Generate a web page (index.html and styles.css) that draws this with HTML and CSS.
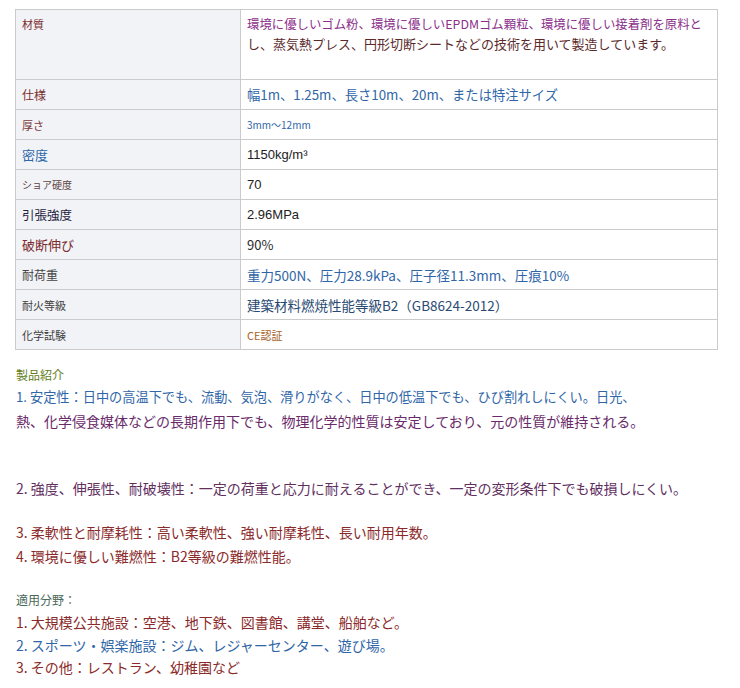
FILE: index.html
```html
<!DOCTYPE html>
<html lang="ja">
<head>
<meta charset="utf-8">
<link rel="stylesheet" href="styles.css">
</head>
<body>
<table class="spec">
  <colgroup><col class="c-label"><col class="c-value"></colgroup>
  <tr class="r-tall">
    <td class="lab top l-material">材質</td>
    <td class="val top v-material">
      <span class="ln ln1">環境に優しいゴム粉、環境に優しいEPDMゴム顆粒、環境に優しい接着剤を原料と</span>
      <span class="ln ln2">し、蒸気熱プレス、円形切断シートなどの技術を用いて製造しています。</span>
    </td>
  </tr>
  <tr>
    <td class="lab l-spec">仕様</td>
    <td class="val v-spec">幅1m、1.25m、長さ10m、20m、または特注サイズ</td>
  </tr>
  <tr>
    <td class="lab l-thick">厚さ</td>
    <td class="val v-thick">3mm〜12mm</td>
  </tr>
  <tr>
    <td class="lab l-density">密度</td>
    <td class="val v-arial">1150kg/m³</td>
  </tr>
  <tr>
    <td class="lab l-shore">ショア硬度</td>
    <td class="val v-arial">70</td>
  </tr>
  <tr>
    <td class="lab l-tensile">引張強度</td>
    <td class="val v-arial">2.96MPa</td>
  </tr>
  <tr>
    <td class="lab l-break">破断伸び</td>
    <td class="val v-pct">90%</td>
  </tr>
  <tr>
    <td class="lab l-load">耐荷重</td>
    <td class="val v-load">重力500N、圧力28.9kPa、圧子径11.3mm、圧痕10%</td>
  </tr>
  <tr>
    <td class="lab l-fire">耐火等級</td>
    <td class="val v-fire">建築材料燃焼性能等級B2（GB8624-2012）</td>
  </tr>
  <tr>
    <td class="lab l-chem">化学試験</td>
    <td class="val v-chem">CE認証</td>
  </tr>
</table>

<div class="intro">
  <p class="head head-green">製品紹介</p>
  <p class="line t-blue s13">1. 安定性：日中の高温下でも、流動、気泡、滑りがなく、日中の低温下でも、ひび割れしにくい。日光、</p>
  <p class="line t-purple">熱、化学侵食媒体などの長期作用下でも、物理化学的性質は安定しており、元の性質が維持される。</p>
  <p class="line t-plum gap-big">2. 強度、伸張性、耐破壊性：一定の荷重と応力に耐えることができ、一定の変形条件下でも破損しにくい。</p>
  <p class="line t-red gap-mid">3. 柔軟性と耐摩耗性：高い柔軟性、強い耐摩耗性、長い耐用年数。</p>
  <p class="line t-red">4. 環境に優しい難燃性：B2等級の難燃性能。</p>
  <p class="head head-gray">適用分野：</p>
  <p class="line t-red">1. 大規模公共施設：空港、地下鉄、図書館、講堂、船舶など。</p>
  <p class="line t-blue lh22">2. スポーツ・娯楽施設：ジム、レジャーセンター、遊び場。</p>
  <p class="line t-red lh22">3. その他：レストラン、幼稚園など</p>
</div>
</body>
</html>
```

FILE: styles.css
```css
html, body {
  margin: 0;
  padding: 0;
  background: #ffffff;
}

body {
  padding: 9px 15px 0 15px;
  font-family: "Noto Sans CJK JP", "Noto Sans", sans-serif;
  color: #333;
}

.spec {
  border-collapse: collapse;
  table-layout: fixed;
  width: 703px;
}

.c-label { width: 225px; }

.spec td {
  border: 1px solid #cbcbcb;
  height: 29px;
  padding: 0 6px;
  vertical-align: middle;
  line-height: 18px;
}

.spec tr.r-tall td { height: 64px; }

.spec td.top {
  vertical-align: top;
  padding-top: 5px;
}

.lab {
  background: #f2f3f7;
}

.l-material { font-size: 11px; color: #7a2d2d; }
.l-spec     { font-size: 12px; color: #7a2d2d; }
.l-thick    { font-size: 11px; color: #7a3a3a; }
.l-density  { font-size: 13px; color: #2b68a8; }
.l-shore    { font-size: 10px; color: #5a4444; }
.l-tensile  { font-size: 12.5px; color: #1f2440; }
.l-break    { font-size: 13px; color: #7a2a2a; }
.l-load     { font-size: 12px; color: #444444; }
.l-fire     { font-size: 11px; color: #3f3f3f; }
.l-chem     { font-size: 11px; color: #3f3f3f; }

.v-material .ln { display: block; line-height: 19px; white-space: nowrap; }
.v-material .ln1 { font-size: 12.4px; color: #8b2f8b; }
.v-material .ln2 { font-size: 13px; color: #5b2a2a; }

.v-spec  { font-size: 13.3px; color: #2f66a8; }
.v-thick { font-size: 10px; color: #2f66a8; padding-left: 8px; }
.v-arial { font-family: "Liberation Sans", Arial, sans-serif; font-size: 13px; color: #222; padding-left: 10px; }
.v-pct   { font-size: 13px; color: #2a2a2a; padding-left: 10px; }
.v-load  { font-size: 13.5px; color: #2f66a8; padding-left: 9px; }
.v-fire  { font-size: 13.5px; color: #2a4a72; }
.v-chem  { font-size: 11px; color: #a5622a; padding-left: 8px; }

.intro {
  padding-left: 1px;
}

.intro p {
  margin: 0;
  white-space: nowrap;
}

.head {
  font-size: 12px;
  line-height: 20px;
}

.intro .head-green { color: #5f7d1a; margin-top: 15px; }
.intro .head-gray  { color: #4a6a5a; margin-top: 22px; }

.line {
  font-size: 14px;
  line-height: 24px;
}

.s13 { font-size: 13.2px; }
.lh22 { line-height: 22px; }

.intro .gap-big { margin-top: 43px; }
.intro .gap-mid { margin-top: 20px; }

.t-blue   { color: #2f66a8; }
.t-purple { color: #6a2a6a; }
.t-plum   { color: #62305f; }
.t-red    { color: #8b2a2a; }
```
